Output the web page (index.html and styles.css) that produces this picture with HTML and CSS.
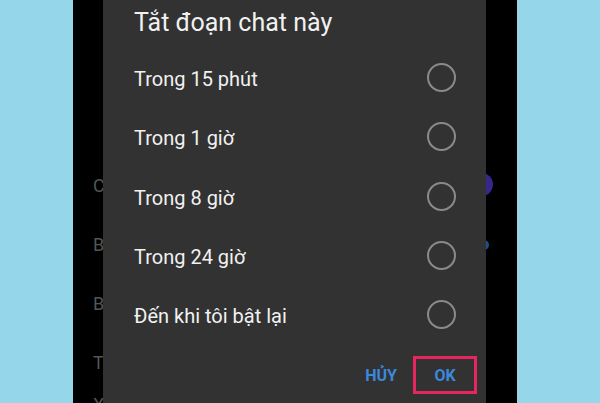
FILE: index.html
```html
<!DOCTYPE html>
<html>
<head>
  <meta charset="UTF-8">
  <title>Tắt đoạn chat này</title>
  <link rel="stylesheet" href="styles.css">
</head>
<body>
  <div class="page">
    <div class="phone">
      <!-- chat list behind the dialog -->
      <ul class="chat-list">
        <li>C</li>
        <li>B</li>
        <li>B</li>
        <li>T</li>
        <li>X</li>
      </ul>
      <span class="dot dot-purple"></span>
      <span class="dot dot-blue"></span>

      <div class="dialog">
        <h1 class="dialog-title">Tắt đoạn chat này</h1>
        <div class="options">
          <label class="option"><span>Trong 15 phút</span><i class="radio"></i></label>
          <label class="option"><span>Trong 1 giờ</span><i class="radio"></i></label>
          <label class="option"><span>Trong 8 giờ</span><i class="radio"></i></label>
          <label class="option"><span>Trong 24 giờ</span><i class="radio"></i></label>
          <label class="option"><span>Đến khi tôi bật lại</span><i class="radio"></i></label>
        </div>
        <div class="actions">
          <button class="btn">HỦY</button>
          <button class="btn btn-ok">OK</button>
        </div>
      </div>
    </div>
  </div>
</body>
</html>
```

FILE: styles.css
```css
html, body {
  margin: 0;
  height: 403px;
  overflow: hidden;
}
body {
  font-family: Roboto, "Noto Sans", sans-serif;
  background-color: #95d6ea;
}
.page {
  height: 403px;
  padding-left: 73px;
}
.phone {
  position: relative;
  width: 444px;
  height: 403px;
  background-color: #000;
  overflow: hidden;
}
.chat-list {
  list-style: none;
  margin: 0;
  padding: 176px 0 0 20px;
  color: #555;
  font-size: 18px;
}
.chat-list li {
  height: 59px;
  line-height: 20px;
}
.chat-list li:nth-child(n+4) {
  height: 42px;
}
.dot {
  position: absolute;
  border-radius: 50%;
}
.dot-purple {
  left: 397px;
  top: 173px;
  width: 23px;
  height: 23px;
  background-color: #35288a;
}
.dot-blue {
  left: 406px;
  top: 240px;
  width: 10px;
  height: 10px;
  background-color: #1d4f8c;
}
.dialog {
  position: absolute;
  left: 30px;
  top: 0;
  width: 383px;
  height: 420px;
  background-color: #323232;
  color: #f1f1f1;
}
.dialog-title {
  margin: 0;
  height: 48px;
  box-sizing: border-box;
  padding: 8px 0 0 31px;
  font-size: 25px;
  font-weight: normal;
  line-height: 30px;
}
.option {
  display: flex;
  align-items: center;
  justify-content: space-between;
  height: 59.3px;
  padding: 0 30px 0 31px;
  font-size: 20px;
}
.option span {
  padding-top: 3px;
}
.radio {
  width: 25px;
  height: 25px;
  border: 2px solid #8a8a8a;
  border-radius: 50%;
}
.actions {
  display: flex;
  justify-content: flex-end;
  align-items: center;
  gap: 16px;
  margin-top: 12px;
  padding-right: 9px;
}
.btn {
  padding: 0;
  border: none;
  background: none;
  color: #3b88dc;
  font-family: Roboto, sans-serif;
  font-size: 16px;
  font-weight: bold;
  height: 38px;
}
.btn-ok {
  width: 64px;
  border: 3px solid #e8255f;
}
```
